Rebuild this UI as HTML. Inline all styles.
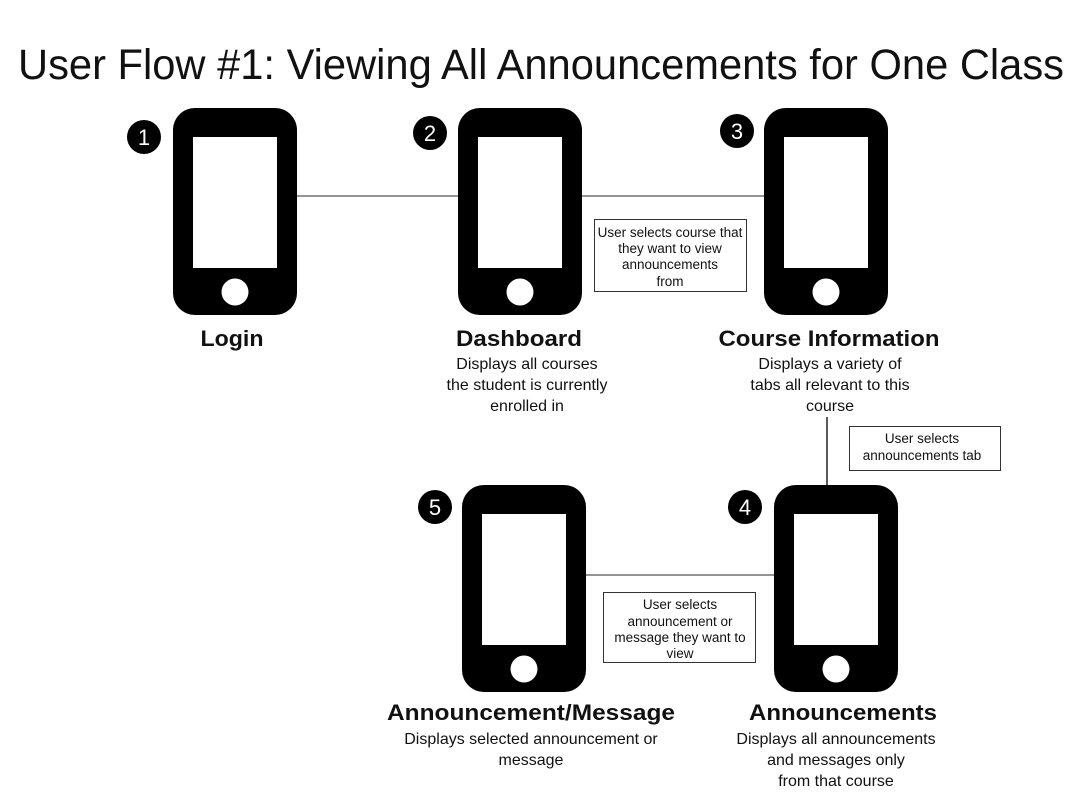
<!DOCTYPE html>
<html><head><style>body{margin:0;background:#fff}svg{display:block}</style></head><body>
<svg width="1080" height="810" viewBox="0 0 1080 810" xmlns="http://www.w3.org/2000/svg" font-family="Liberation Sans, sans-serif">
<text x="18" y="79" font-size="43" font-weight="300" textLength="1046" lengthAdjust="spacingAndGlyphs" fill="#111">User Flow #1: Viewing All Announcements for One Class</text>
<g stroke="#555" stroke-width="1.3">
<line x1="297" y1="196" x2="459" y2="196"/><line x1="581" y1="196" x2="765" y2="196"/>
<line x1="827" y1="417" x2="827" y2="485" stroke="#000"/>
<line x1="585" y1="575" x2="775" y2="575"/>
</g>
<defs><g id="ph"><rect x="0" y="0" width="124" height="207" rx="22" fill="#000"/><rect x="20" y="29" width="84" height="131" fill="#fff"/><circle cx="62" cy="184" r="13.5" fill="#fff"/></g></defs>
<use href="#ph" x="173" y="108"/><use href="#ph" x="458" y="108"/><use href="#ph" x="764" y="108"/>
<use href="#ph" x="774" y="485"/><use href="#ph" x="462" y="485"/>
<g font-size="22" fill="#fff" text-anchor="middle">
<circle cx="144" cy="137" r="17" fill="#000"/><text x="144" y="145">1</text>
<circle cx="430" cy="133" r="17" fill="#000"/><text x="430" y="141">2</text>
<circle cx="737" cy="131" r="17" fill="#000"/><text x="737" y="139">3</text>
<circle cx="745" cy="507" r="17" fill="#000"/><text x="745" y="515">4</text>
<circle cx="435" cy="507" r="17" fill="#000"/><text x="435" y="515">5</text>
</g>
<g text-anchor="middle" fill="#111">
<g font-size="22" font-weight="bold">
<text x="232" y="346" textLength="63" lengthAdjust="spacingAndGlyphs">Login</text><text x="519" y="346" textLength="126" lengthAdjust="spacingAndGlyphs">Dashboard</text><text x="829" y="346" textLength="221" lengthAdjust="spacingAndGlyphs">Course Information</text>
<text x="531" y="720" textLength="288" lengthAdjust="spacingAndGlyphs">Announcement/Message</text><text x="843" y="720" textLength="188" lengthAdjust="spacingAndGlyphs">Announcements</text>
</g>
<g font-size="16" font-weight="300">
<text x="527" y="369">Displays all courses</text><text x="527" y="390">the student is currently</text><text x="527" y="411">enrolled in</text>
<text x="830" y="369">Displays a variety of</text><text x="830" y="390">tabs all relevant to this</text><text x="830" y="411">course</text>
<text x="531" y="744">Displays selected announcement or</text><text x="531" y="765">message</text>
<text x="836" y="744">Displays all announcements</text><text x="836" y="765">and messages only</text><text x="836" y="786">from that course</text>
</g>
<g font-size="13.5">
<rect x="594.5" y="219.5" width="152" height="72" fill="#fff" stroke="#333"/>
<text x="670" y="237">User selects course that</text><text x="670" y="253">they want to view</text><text x="670" y="269">announcements</text><text x="670" y="286">from</text>
<rect x="849.5" y="426.5" width="151" height="44" fill="#fff" stroke="#333"/>
<text x="922" y="443">User selects</text><text x="922" y="460">announcements tab</text>
<rect x="603.5" y="592.5" width="152" height="70" fill="#fff" stroke="#333"/>
<text x="680" y="609">User selects</text><text x="680" y="626">announcement or</text><text x="680" y="642">message they want to</text><text x="680" y="658">view</text>
</g>
</g>
</svg>
</body></html>
